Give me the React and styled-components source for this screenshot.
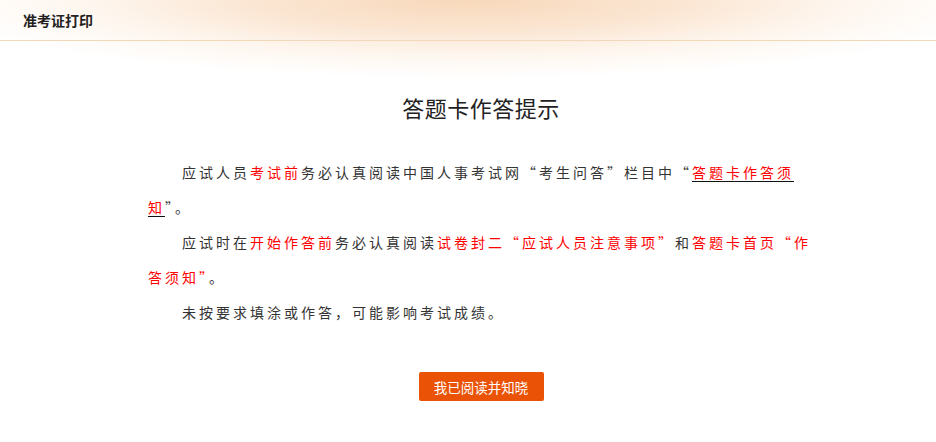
import React from 'react'
import styled, { createGlobalStyle } from 'styled-components'

const GlobalStyle = createGlobalStyle`
	html, body {
		margin: 0;
		padding: 0;
		background: #fff;
	}
	body {
		font-family: "Noto Sans CJK SC", "Noto Sans", sans-serif;
		color: #333;
	}
`

const Page = styled.div`
	min-height: 442px;
	background: radial-gradient(ellipse 540px 78px at 50% 0, #f8d8ba 0%, #fbe6d3 40%, #fef6ee 70%, rgba(255, 255, 255, 0) 100%) no-repeat;
`

const Header = styled.header`
	height: 40px;
	display: flex;
	align-items: center;
	padding-left: 23px;
	border-bottom: 1px solid #f1d8b8;
	font-size: 14px;
	font-weight: 700;
	color: #222;
`

const Main = styled.main`
	width: 666px;
	margin-left: 148px;
	display: flex;
	flex-direction: column;
	align-items: center;
`

const Title = styled.h1`
	margin: 51px 0 0;
	font-size: 22px;
	line-height: 30px;
	font-weight: 400;
	letter-spacing: 0.5px;
	color: #222;
`

const Notes = styled.div`
	align-self: stretch;
	margin-top: 33px;
`

const Para = styled.p`
	margin: 0;
	font-size: 14px;
	line-height: 35px;
	letter-spacing: 3px;
	text-indent: 34px;
	color: #333;
`

const Red = styled.span`
	color: #f00;
`

const Link = styled.a`
	color: #f00;
	text-decoration: underline;
	text-decoration-color: #111;
	text-underline-offset: 3px;
`

const ConfirmButton = styled.button`
	margin-top: 42px;
	width: 125px;
	height: 29px;
	border: 0;
	border-radius: 2px;
	background: #ea5206;
	color: #fff;
	font-family: inherit;
	font-size: 13.5px;
	cursor: pointer;
`

const App = () => (
	<Page>
		<GlobalStyle />
		<Header>准考证打印</Header>
		<Main>
			<Title>答题卡作答提示</Title>
			<Notes>
				<Para>
					应试人员<Red>考试前</Red>务必认真阅读中国人事考试网“考生问答”栏目中“<Link>答题卡作答须知</Link>”。
				</Para>
				<Para>
					应试时在<Red>开始作答前</Red>务必认真阅读<Red>试卷封二“应试人员注意事项”</Red>和<Red>答题卡首页“作答须知”</Red>。
				</Para>
				<Para>未按要求填涂或作答，可能影响考试成绩。</Para>
			</Notes>
			<ConfirmButton>我已阅读并知晓</ConfirmButton>
		</Main>
	</Page>
)

export default App
